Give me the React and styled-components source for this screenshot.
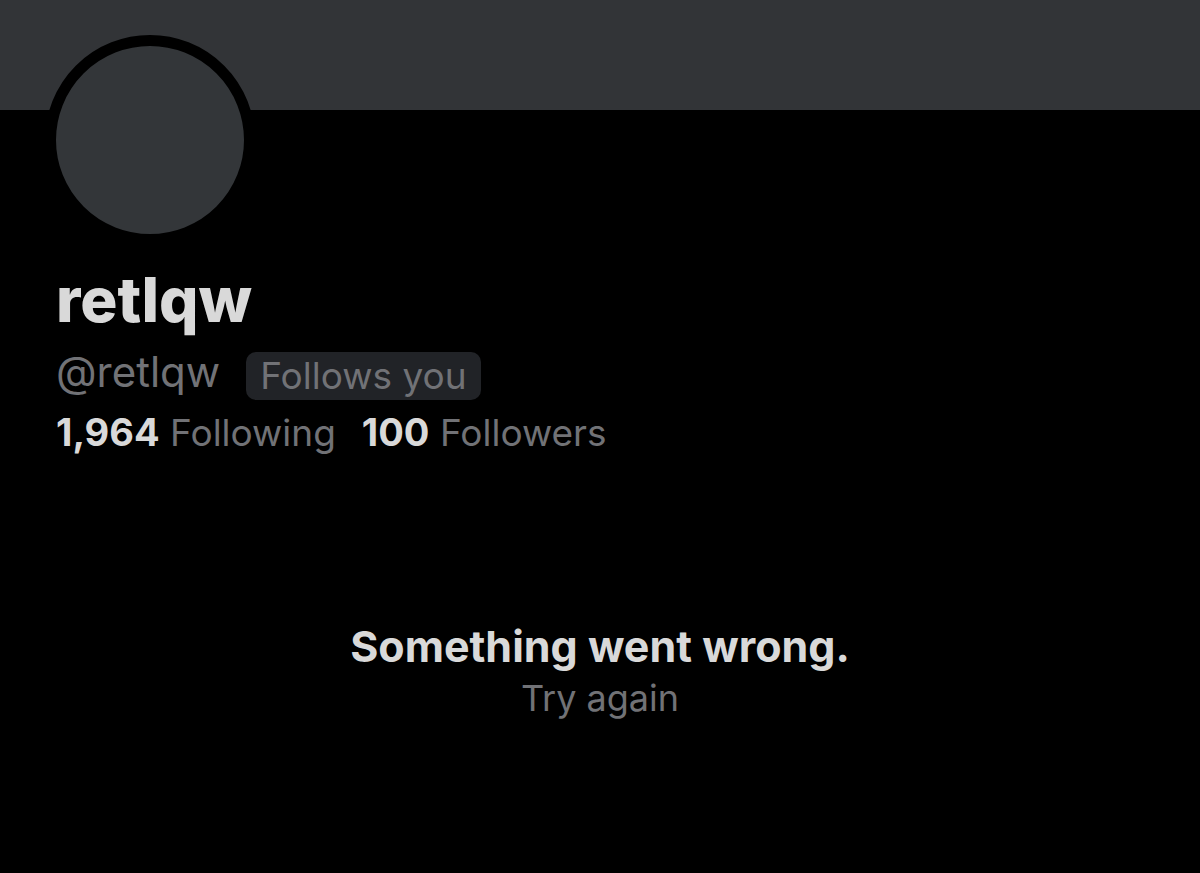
import styled, { createGlobalStyle } from 'styled-components';

const GlobalStyle = createGlobalStyle`
  * {
    box-sizing: border-box;
  }

  body {
    margin: 0;
    background: #000;
    color: #d9d9d9;
    font-family: 'Inter', 'Liberation Sans', sans-serif;
    font-size: 37px;
    line-height: 52px;
  }
`;

const Banner = styled.div`
  height: 110px;
  background: #323437;
`;

const Profile = styled.header`
  padding: 0 56px;
`;

const Avatar = styled.div`
  width: 210px;
  height: 210px;
  margin: -75px 0 0 -11px;
  border: 11px solid #000;
  border-radius: 50%;
  background: #333639;
`;

const DisplayName = styled.h1`
  margin: 15px 0 6px;
  font-size: 62px;
  font-weight: 800;
  line-height: 80px;
`;

const HandleRow = styled.div`
  display: flex;
  align-items: flex-start;
  gap: 26px;
  color: #717276;
`;

const Handle = styled.span`
  font-size: 42px;
`;

const FollowsBadge = styled.span`
  margin-top: 6px;
  padding: 0 14px;
  border-radius: 10px;
  background: #212327;
  line-height: 48px;
`;

const Stats = styled.nav`
  display: flex;
  flex-wrap: wrap;
  gap: 0 26px;
  margin-top: 6px;
`;

const StatLink = styled.a`
  color: #717276;
  text-decoration: none;
`;

const StatCount = styled.strong`
  color: #d9d9d9;
  font-size: 38px;
  font-weight: 700;
`;

const ErrorState = styled.section`
  display: flex;
  flex-direction: column;
  align-items: center;
  padding: 161px 56px 160px;
`;

const ErrorTitle = styled.h2`
  margin: 0;
  font-size: 43px;
  font-weight: 700;
  line-height: 52px;
`;

const RetryButton = styled.button`
  padding: 0;
  border: 0;
  background: none;
  color: #717276;
  font: inherit;
  font-size: 36px;
  line-height: 52px;
  cursor: pointer;
`;

const stats = [
  { label: 'Following', count: '1,964' },
  { label: 'Followers', count: '100' },
];

function App() {
  return (
    <main>
      <GlobalStyle />
      <Banner />
      <Profile>
        <Avatar />
        <DisplayName>retlqw</DisplayName>
        <HandleRow>
          <Handle>@retlqw</Handle>
          <FollowsBadge>Follows you</FollowsBadge>
        </HandleRow>
        <Stats>
          {stats.map((stat) => (
            <StatLink key={stat.label} href="#">
              <StatCount>{stat.count}</StatCount> {stat.label}
            </StatLink>
          ))}
        </Stats>
      </Profile>
      <ErrorState>
        <ErrorTitle>Something went wrong.</ErrorTitle>
        <RetryButton type="button">Try again</RetryButton>
      </ErrorState>
    </main>
  );
}

export default App;
